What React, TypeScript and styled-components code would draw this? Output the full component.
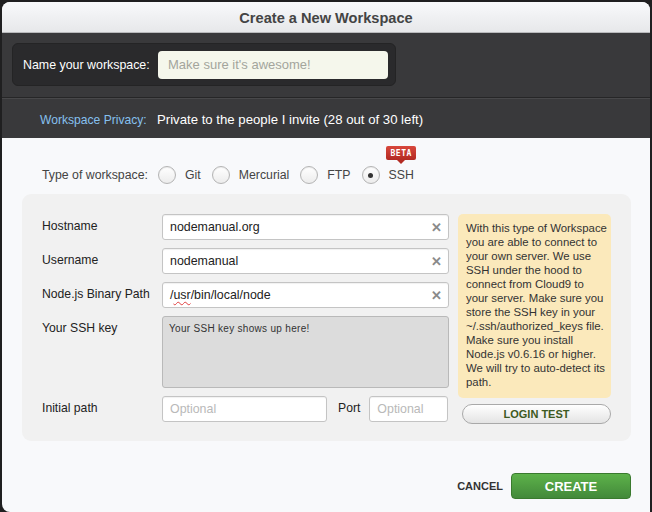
import React from "react";
import styled, { createGlobalStyle } from "styled-components";

const Global = createGlobalStyle`
  html, body { margin: 0; padding: 0; background: #1f1f20; }
  body { font-family: "Liberation Sans", Arial, sans-serif; }
  * { box-sizing: border-box; }
`;

const Page = styled.div`
  width: 652px;
  height: 512px;
  padding: 2px 2px 0 2px;
  background: #1f1f20;
  overflow: hidden;
`;

const Window = styled.div`
  width: 648px;
  height: 510px;
  border-radius: 8px 8px 0 8px;
  background: #f8f9fb;
  overflow: hidden;
  display: flex;
  flex-direction: column;
`;

const TitleBar = styled.div`
  height: 31px;
  background: linear-gradient(#f8f9fb, #e7e8ea);
  border-bottom: 1px solid #b9babc;
  display: flex;
  align-items: center;
  justify-content: center;
  padding-top: 2px;
  font-size: 14.6px;
  font-weight: bold;
  color: #444;
`;

const DarkSection = styled.div`
  background: #39393b;
  height: 65px;
  padding: 10px 0 0 10px;
  border-bottom: 1px solid #262627;
`;

const NameBox = styled.div`
  width: 384px;
  height: 43px;
  background: #2a2a2c;
  border: 1px solid #242425;
  border-radius: 6px;
  display: flex;
  align-items: center;
  padding-left: 10px;
  gap: 10px;
`;

const NameLabel = styled.span`
  color: #fff;
  font-size: 12.4px;
  width: 125px;
  white-space: nowrap;
`;

const NameInput = styled.div`
  width: 230px;
  height: 28px;
  border-radius: 4px;
  background: #f5f7ec;
  color: #a3a59c;
  font-size: 13px;
  display: flex;
  align-items: center;
  padding-left: 10px;
`;

const PrivacyRow = styled.div`
  height: 40px;
  background: #39393b;
  border-top: 1px solid #48484a;
  display: flex;
  align-items: center;
  padding-top: 2px;
`;

const PrivacyLabel = styled.span`
  width: 155px;
  padding-left: 38px;
  color: #86c0ef;
  font-size: 12.1px;
  white-space: nowrap;
`;

const PrivacyValue = styled.span`
  color: #fff;
  font-size: 13.2px;
  white-space: nowrap;
`;

const Body = styled.div`
  flex: 1;
  padding: 0 19px 0 20px;
  display: flex;
  flex-direction: column;
`;

const TypeRow = styled.div`
  height: 56px;
  display: flex;
  align-items: center;
  padding: 18px 0 0 20px;
  font-size: 12.3px;
  color: #444;
`;

const TypeLabel = styled.span`
  width: 116px;
  white-space: nowrap;
`;

const RadioOption = styled.label`
  display: flex;
  align-items: center;
  gap: 9px;
  margin-right: 11px;
`;

const RadioText = styled.span`
  position: relative;
`;

const RadioCircle = styled.span<{ $checked?: boolean }>`
  width: 18px;
  height: 18px;
  border-radius: 50%;
  border: 1px solid #b4b4b4;
  background: linear-gradient(#ffffff, #ececec);
  box-shadow: inset 0 1px 1px rgba(0,0,0,0.08);
  display: flex;
  align-items: center;
  justify-content: center;
  &::after {
    content: "";
    display: ${(p) => (p.$checked ? "block" : "none")};
    width: 5px;
    height: 5px;
    border-radius: 50%;
    background: #333;
  }
`;

const Beta = styled.span`
  position: absolute;
  left: 50%;
  transform: translateX(-50%);
  top: -22px;
  width: 30px;
  height: 14px;
  background: linear-gradient(#d8473c, #b32a22);
  border-radius: 2px;
  color: #fff;
  font-family: "DejaVu Sans Mono", monospace;
  font-size: 8px;
  font-weight: bold;
  letter-spacing: 0.5px;
  display: flex;
  align-items: center;
  justify-content: center;
  &::after {
    content: "";
    position: absolute;
    left: 11px;
    bottom: -4px;
    border-left: 4px solid transparent;
    border-right: 4px solid transparent;
    border-top: 4px solid #b32a22;
  }
`;

const Panel = styled.div`
  width: 609px;
  height: 247px;
  background: #f1f1f1;
  border-radius: 9px;
  padding: 20px 20px 0 20px;
  display: flex;
  gap: 9px;
`;

const Fields = styled.div`
  width: 407px;
  display: flex;
  flex-direction: column;
  gap: 8px;
`;

const FieldRow = styled.div`
  display: flex;
  align-items: flex-start;
`;

const FieldLabel = styled.span`
  width: 120px;
  font-size: 12.2px;
  color: #222;
  padding-top: 5px;
  white-space: nowrap;
`;

const TextInput = styled.div<{ $w?: number; $placeholder?: boolean }>`
  width: ${(p) => p.$w ?? 287}px;
  height: 26px;
  background: #fff;
  border: 1px solid #c4c4c4;
  border-radius: 3px;
  box-shadow: inset 0 1px 1px rgba(0,0,0,0.06);
  display: flex;
  align-items: center;
  justify-content: space-between;
  padding: 0 6px 0 7px;
  font-size: 12.4px;
  color: ${(p) => (p.$placeholder ? "#b9b9b9" : "#222")};
`;

const Clear = styled.span`
  color: #8a8a8a;
  font-size: 13px;
  font-weight: bold;
`;

const Squiggle = styled.span`
  text-decoration: underline wavy #e04040;
  text-decoration-thickness: 1px;
  text-underline-offset: 2px;
`;

const KeyArea = styled.div`
  width: 287px;
  height: 72px;
  background: #dcdcdc;
  border: 1px solid #b9b9b9;
  border-radius: 3px;
  padding: 6px 6px;
  font-size: 10px;
  letter-spacing: 0.3px;
  color: #333;
`;

const PortLabel = styled.span`
  font-size: 12.2px;
  color: #222;
  padding: 5px 9px 0 11px;
`;

const Side = styled.div`
  width: 153px;
  display: flex;
  flex-direction: column;
  gap: 6px;
`;

const Info = styled.div`
  background: #fbe9bb;
  border-radius: 5px;
  padding: 7px 4px 7px 8px;
  font-size: 11.4px;
  line-height: 14px;
  color: #333;
  height: 184px;
`;

const LoginButton = styled.button`
  margin-left: 4px;
  width: 149px;
  height: 20px;
  border-radius: 10px;
  border: 1px solid #a9a9a9;
  background: linear-gradient(#ffffff, #e4e4e4);
  font-family: inherit;
  font-size: 11px;
  font-weight: bold;
  color: #3d5a22;
  padding: 0;
`;

const Footer = styled.div`
  display: flex;
  justify-content: flex-end;
  align-items: center;
  padding-top: 32px;
  gap: 8px;
`;

const CancelButton = styled.button`
  border: none;
  background: none;
  font-family: inherit;
  font-size: 11px;
  font-weight: bold;
  color: #333;
  padding: 0;
`;

const CreateButton = styled.button`
  width: 120px;
  height: 26px;
  border-radius: 4px;
  border: 1px solid #3a7a2e;
  background: linear-gradient(#5db24a, #43893a);
  color: #fff;
  font-family: inherit;
  font-size: 13px;
  font-weight: bold;
  padding: 0;
`;

export default function App() {
  return (
    <Page>
      <Global />
      <Window>
        <TitleBar>Create a New Workspace</TitleBar>
        <DarkSection>
          <NameBox>
            <NameLabel>Name your workspace:</NameLabel>
            <NameInput>Make sure it's awesome!</NameInput>
          </NameBox>
        </DarkSection>
        <PrivacyRow>
          <PrivacyLabel>Workspace Privacy:</PrivacyLabel>
          <PrivacyValue>Private to the people I invite (28 out of 30 left)</PrivacyValue>
        </PrivacyRow>
        <Body>
          <TypeRow>
            <TypeLabel>Type of workspace:</TypeLabel>
            <RadioOption><RadioCircle /><RadioText>Git</RadioText></RadioOption>
            <RadioOption><RadioCircle /><RadioText>Mercurial</RadioText></RadioOption>
            <RadioOption><RadioCircle /><RadioText>FTP</RadioText></RadioOption>
            <RadioOption>
              <RadioCircle $checked />
              <RadioText>SSH<Beta>BETA</Beta></RadioText>
            </RadioOption>
          </TypeRow>
          <Panel>
            <Fields>
              <FieldRow>
                <FieldLabel>Hostname</FieldLabel>
                <TextInput>nodemanual.org<Clear>✕</Clear></TextInput>
              </FieldRow>
              <FieldRow>
                <FieldLabel>Username</FieldLabel>
                <TextInput>nodemanual<Clear>✕</Clear></TextInput>
              </FieldRow>
              <FieldRow>
                <FieldLabel>Node.js Binary Path</FieldLabel>
                <TextInput><span>/<Squiggle>usr</Squiggle>/bin/local/node</span><Clear>✕</Clear></TextInput>
              </FieldRow>
              <FieldRow>
                <FieldLabel>Your SSH key</FieldLabel>
                <KeyArea>Your SSH key shows up here!</KeyArea>
              </FieldRow>
              <FieldRow>
                <FieldLabel>Initial path</FieldLabel>
                <TextInput $w={165} $placeholder>Optional</TextInput>
                <PortLabel>Port</PortLabel>
                <TextInput $w={79} $placeholder>Optional</TextInput>
              </FieldRow>
            </Fields>
            <Side>
              <Info>
                With this type of Workspace you are able to connect to your own server. We use SSH under the hood to connect from Cloud9 to your server. Make sure you store the SSH key in your ~/.ssh/authorized_keys file. Make sure you install Node.js v0.6.16 or higher. We will try to auto-detect its path.
              </Info>
              <LoginButton>LOGIN TEST</LoginButton>
            </Side>
          </Panel>
          <Footer>
            <CancelButton>CANCEL</CancelButton>
            <CreateButton>CREATE</CreateButton>
          </Footer>
        </Body>
      </Window>
    </Page>
  );
}
